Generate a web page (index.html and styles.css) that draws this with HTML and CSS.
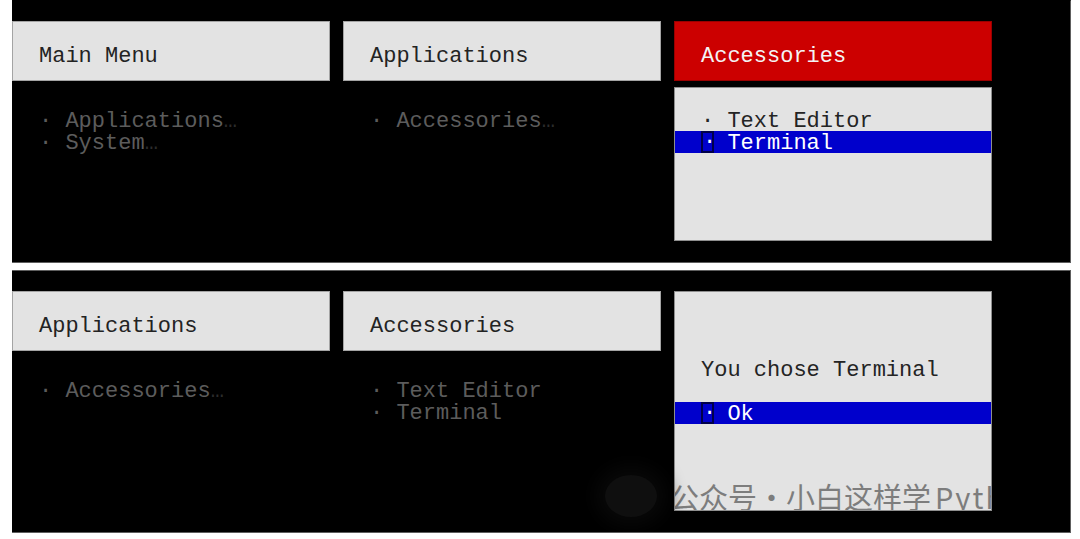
FILE: index.html
```html
<!DOCTYPE html>
<html lang="en">
<head>
<meta charset="utf-8">
<title>Menu navigation</title>
<link rel="stylesheet" href="styles.css">
</head>
<body>
<div class="page">
  <section class="panel first">
    <div class="col">
      <div class="hdr">Main Menu</div>
      <ul class="list dim">
        <li>· Applications<span class="more">…</span></li>
        <li>· System<span class="more">…</span></li>
      </ul>
    </div>
    <div class="col">
      <div class="hdr">Applications</div>
      <ul class="list dim">
        <li>· Accessories<span class="more">…</span></li>
      </ul>
    </div>
    <div class="col">
      <div class="hdr active">Accessories</div>
      <ul class="list box">
        <li>· Text Editor</li>
        <li class="sel"><span class="cur">·</span> Terminal</li>
      </ul>
    </div>
  </section>

  <section class="panel">
    <div class="col">
      <div class="hdr">Applications</div>
      <ul class="list dim">
        <li>· Accessories<span class="more">…</span></li>
      </ul>
    </div>
    <div class="col">
      <div class="hdr">Accessories</div>
      <ul class="list dim">
        <li>· Text Editor</li>
        <li>· Terminal</li>
      </ul>
    </div>
    <div class="col">
      <div class="dialog">
        <p class="msg">You chose Terminal</p>
        <ul class="list plain">
          <li class="sel"><span class="cur">·</span> Ok</li>
        </ul>
        <div class="wm">公众号·小白这样学<span class="wm-latin">Python</span></div>
      </div>
    </div>
    <div class="wm-logo"></div>
  </section>
</div>
</body>
</html>
```

FILE: styles.css
```css
html, body {
  margin: 0;
  padding: 0;
  background: #ffffff;
}

.page {
  padding-left: 12px;
  width: 1059px;
  display: flex;
  flex-direction: column;
  gap: 7px;
  font-family: "Liberation Mono", "DejaVu Sans Mono", monospace;
  font-size: 22px;
  line-height: 20px;
}

.panel {
  position: relative;
  height: 263px;
  box-sizing: border-box;
  background: #000000;
  border: 1px solid #5e5e5e;
  border-left: none;
  padding-top: 20px;
  display: grid;
  grid-template-columns: repeat(3, 318px);
  column-gap: 13px;
  align-content: start;
  overflow: hidden;
}

.panel.first {
  border-top-color: #000000;
}

.col {
  display: flex;
  flex-direction: column;
  gap: 6px;
}

.hdr {
  height: 60px;
  box-sizing: border-box;
  background: #e3e3e3;
  border: 1px solid #a4a4a4;
  padding: 25px 0 0 26px;
  color: #232323;
  white-space: pre;
}

.hdr.active {
  background: #cc0000;
  border-color: #9a0000;
  color: #f4f4f4;
}

.list {
  list-style: none;
  margin: 0;
  padding: 21px 0 0 0;
  height: 154px;
  box-sizing: border-box;
  border: 1px solid transparent;
}

.list li {
  padding: 3px 0 0 26px;
  height: 22px;
  box-sizing: border-box;
  white-space: pre;
}

.list.dim {
  color: #5c5c5c;
}

.list .more {
  color: #2c2c2c;
}

.list.box {
  background: #e3e3e3;
  border-color: #8e8e8e;
  color: #242424;
}

.list li.sel {
  background: #0000cc;
  color: #ffffff;
}

.cur {
  display: inline-block;
  width: 1ch;
  height: 22px;
  margin-top: -3px;
  box-sizing: border-box;
  border: 2px solid #00004a;
  vertical-align: top;
  text-align: center;
  line-height: 20px;
}

.dialog {
  position: relative;
  height: 220px;
  box-sizing: border-box;
  background: #e3e3e3;
  border: 1px solid #8e8e8e;
  padding-top: 66px;
  color: #242424;
  overflow: hidden;
}

.msg {
  margin: 0 0 22px 0;
  padding: 3px 0 0 26px;
  height: 22px;
  box-sizing: border-box;
  white-space: pre;
}

.list.plain {
  padding: 0;
  height: auto;
  border: none;
}

.wm {
  position: absolute;
  left: -5px;
  bottom: -1px;
  font-family: "Noto Sans CJK SC", sans-serif;
  font-size: 29px;
  line-height: 30px;
  color: #7d7d7d;
  white-space: nowrap;
}

.wm-latin {
  margin-left: 4px;
  letter-spacing: 2px;
}

.wm-logo {
  position: absolute;
  left: 593px;
  top: 204px;
  width: 52px;
  height: 42px;
  border-radius: 50%;
  background: #0f0f0f;
  box-shadow: 0 0 18px 10px #080808;
}
```
